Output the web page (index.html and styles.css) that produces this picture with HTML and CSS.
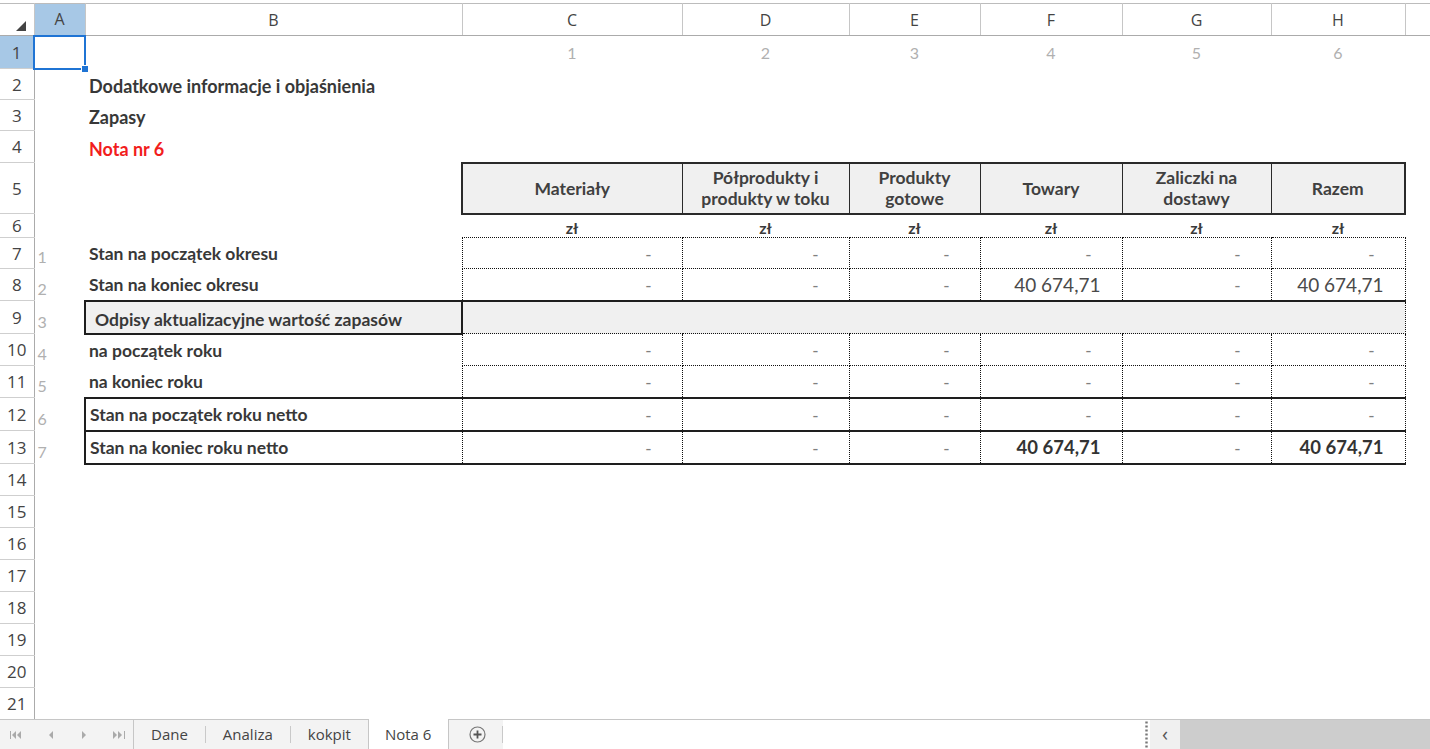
FILE: index.html
```html
<!DOCTYPE html>
<html lang="pl">
<head>
  <meta charset="UTF-8" />
  <title>Nota 6 - Zapasy</title>
  <link rel="stylesheet" href="styles.css">
</head>
<body>
  <!-- Arkusz -->
  <div class="sheet-wrap">
    <table class="sheet">
      <colgroup>
        <col style="width:34px"><col style="width:51px"><col style="width:377px">
        <col style="width:220px"><col style="width:167px"><col style="width:131px">
        <col style="width:142px"><col style="width:149px"><col style="width:134px">
        <col style="width:25px">
      </colgroup>
      <tr class="cols">
        <th class="corner"><svg width="10" height="10" viewBox="0 0 10 10"><polygon points="10,0 10,10 0,10" fill="#444"/></svg></th>
        <th class="sel">A</th><th>B</th><th>C</th><th>D</th><th>E</th><th>F</th><th>G</th><th>H</th><th></th>
      </tr>
      <tr style="height:33px">
        <th class="rh sel">1</th>
        <td class="active"><span class="handle"></span></td><td></td>
        <td class="idx">1</td><td class="idx">2</td><td class="idx">3</td><td class="idx">4</td><td class="idx">5</td><td class="idx">6</td><td></td>
      </tr>
      <tr style="height:31px">
        <th class="rh">2</th><td></td><td class="lbl low title">Dodatkowe informacje i objaśnienia</td>
        <td></td><td></td><td></td><td></td><td></td><td></td><td></td>
      </tr>
      <tr style="height:31px">
        <th class="rh">3</th><td></td><td class="lbl low title">Zapasy</td>
        <td></td><td></td><td></td><td></td><td></td><td></td><td></td>
      </tr>
      <tr style="height:32px">
        <th class="rh">4</th><td></td><td class="lbl low title red">Nota nr 6</td>
        <td></td><td></td><td></td><td></td><td></td><td></td><td></td>
      </tr>
      <tr style="height:51px">
        <th class="rh">5</th><td></td><td></td>
        <td class="hd first">Materiały</td>
        <td class="hd">Półprodukty i<br>produkty w toku</td>
        <td class="hd">Produkty<br>gotowe</td>
        <td class="hd">Towary</td>
        <td class="hd">Zaliczki na<br>dostawy</td>
        <td class="hd last">Razem</td>
        <td></td>
      </tr>
      <tr style="height:23px">
        <th class="rh">6</th><td></td><td></td>
        <td class="cur">zł</td><td class="cur">zł</td><td class="cur">zł</td><td class="cur">zł</td><td class="cur">zł</td><td class="cur">zł</td><td></td>
      </tr>
      <tr style="height:31px">
        <th class="rh">7</th><td class="no">1</td><td class="lbl">Stan na początek okresu</td>
        <td class="v"><span class="dash">-</span></td><td class="v"><span class="dash">-</span></td><td class="v"><span class="dash">-</span></td>
        <td class="v"><span class="dash">-</span></td><td class="v"><span class="dash">-</span></td><td class="v"><span class="dash">-</span></td><td></td>
      </tr>
      <tr style="height:32px">
        <th class="rh">8</th><td class="no">2</td><td class="lbl">Stan na koniec okresu</td>
        <td class="v"><span class="dash">-</span></td><td class="v"><span class="dash">-</span></td><td class="v"><span class="dash">-</span></td>
        <td class="v">40 674,71</td><td class="v"><span class="dash">-</span></td><td class="v">40 674,71</td><td></td>
      </tr>
      <tr style="height:33px">
        <th class="rh">9</th><td class="no">3</td><td class="lbl box">Odpisy aktualizacyjne wartość zapasów</td>
        <td class="band" colspan="6"></td><td></td>
      </tr>
      <tr style="height:32px">
        <th class="rh">10</th><td class="no">4</td><td class="lbl">na początek roku</td>
        <td class="v"><span class="dash">-</span></td><td class="v"><span class="dash">-</span></td><td class="v"><span class="dash">-</span></td>
        <td class="v"><span class="dash">-</span></td><td class="v"><span class="dash">-</span></td><td class="v"><span class="dash">-</span></td><td></td>
      </tr>
      <tr style="height:32px">
        <th class="rh">11</th><td class="no">5</td><td class="lbl">na koniec roku</td>
        <td class="v"><span class="dash">-</span></td><td class="v"><span class="dash">-</span></td><td class="v"><span class="dash">-</span></td>
        <td class="v"><span class="dash">-</span></td><td class="v"><span class="dash">-</span></td><td class="v"><span class="dash">-</span></td><td></td>
      </tr>
      <tr class="net" style="height:33px">
        <th class="rh">12</th><td class="no">6</td><td class="lbl">Stan na początek roku netto</td>
        <td class="v"><span class="dash">-</span></td><td class="v"><span class="dash">-</span></td><td class="v"><span class="dash">-</span></td>
        <td class="v"><span class="dash">-</span></td><td class="v"><span class="dash">-</span></td><td class="v"><span class="dash">-</span></td><td></td>
      </tr>
      <tr class="net" style="height:33px">
        <th class="rh">13</th><td class="no">7</td><td class="lbl">Stan na koniec roku netto</td>
        <td class="v"><span class="dash">-</span></td><td class="v"><span class="dash">-</span></td><td class="v"><span class="dash">-</span></td>
        <td class="v strong">40 674,71</td><td class="v"><span class="dash">-</span></td><td class="v strong">40 674,71</td><td></td>
      </tr>
      <tr class="empty"><th class="rh">14</th><td colspan="9"></td></tr>
      <tr class="empty"><th class="rh">15</th><td colspan="9"></td></tr>
      <tr class="empty"><th class="rh">16</th><td colspan="9"></td></tr>
      <tr class="empty"><th class="rh">17</th><td colspan="9"></td></tr>
      <tr class="empty"><th class="rh">18</th><td colspan="9"></td></tr>
      <tr class="empty"><th class="rh">19</th><td colspan="9"></td></tr>
      <tr class="empty"><th class="rh">20</th><td colspan="9"></td></tr>
      <tr class="empty"><th class="rh">21</th><td colspan="9"></td></tr>
    </table>
  </div>

  <!-- Zakładki arkuszy -->
  <div class="tabbar">
    <div class="nav">
      <svg width="12" height="8" viewBox="0 0 12 8"><rect x="0" y="0" width="1" height="8" fill="#aaa"/><polygon points="6,0 6,8 2,4" fill="#aaa"/><polygon points="11,0 11,8 7,4" fill="#aaa"/></svg>
      <svg width="5" height="8" viewBox="0 0 5 8"><polygon points="4,0 4,8 0,4" fill="#aaa"/></svg>
      <svg width="5" height="8" viewBox="0 0 5 8"><polygon points="1,0 1,8 5,4" fill="#aaa"/></svg>
      <svg width="12" height="8" viewBox="0 0 12 8"><polygon points="0,0 0,8 4,4" fill="#aaa"/><polygon points="5,0 5,8 9,4" fill="#aaa"/><rect x="11" y="0" width="1" height="8" fill="#aaa"/></svg>
    </div>
    <div class="tabs">
      <span class="tab">Dane</span>
      <span class="tab">Analiza</span>
      <span class="tab">kokpit</span>
      <span class="tab on">Nota 6</span>
      <span class="add"><svg width="17" height="17" viewBox="0 0 17 17"><circle cx="8.5" cy="8.5" r="7.5" fill="none" stroke="#777" stroke-width="1.2"/><path d="M8.5 4.5v8M4.5 8.5h8" stroke="#555" stroke-width="1.8"/></svg></span>
    </div>
    <div class="hbar"></div>
    <div class="split"></div>
    <div class="sleft">‹</div>
    <div class="track"></div>
  </div>
</body>
</html>
```

FILE: styles.css
```css
body, html {
  margin: 0;
  padding: 0;
  width: 1430px;
  height: 749px;
  overflow: hidden;
  background-color: #fff;
  font-family: Lato, "Liberation Sans", sans-serif;
  color: #3b3b3b;
}

body {
  display: flex;
  flex-direction: column;
}

/* Sheet grid */
.sheet-wrap {
  flex: 1;
  overflow: hidden;
  padding-top: 3px;
}

.sheet {
  border-collapse: collapse;
  table-layout: fixed;
  width: 1430px;
}

.sheet td {
  padding: 0;
  white-space: nowrap;
  font-size: 17.5px;
}

/* Column letters */
.cols th {
  height: 27px;
  font-family: "Open Sans", sans-serif;
  font-weight: 400;
  font-size: 16px;
  line-height: 20px;
  color: #444;
  border-top: 1px solid #bcbcbc;
  border-right: 1px solid #c6c6c6;
  border-bottom: 1px solid #ababab;
  padding: 0;
}

.cols th.corner {
  text-align: right;
  vertical-align: bottom;
  padding: 0 8px 4px 0;
}

.cols th.corner svg {
  display: block;
  margin-left: auto;
}

.cols th.sel,
.rh.sel {
  background-color: #a7c8e6;
}

/* Row numbers */
.rh {
  font-family: "Open Sans", sans-serif;
  font-weight: 400;
  font-size: 17px;
  color: #444;
  border-right: 1px solid #ababab;
  border-bottom: 1px solid #cfcfcf;
  padding: 0;
}

.empty {
  height: 32px;
}

/* Active cell A1 */
.active {
  position: relative;
  border: 2px solid #1f74d4;
}

.handle {
  position: absolute;
  right: -5px;
  bottom: -5px;
  width: 6px;
  height: 6px;
  background-color: #1f74d4;
  border: 1px solid #fff;
}

.sheet td.idx {
  text-align: center;
  color: #b0b0b0;
  font-size: 16px;
}

.lbl {
  font-weight: 700;
  padding-left: 4px !important;
  color: #383838;
}

.sheet td.title {
  font-size: 18px;
}

.low {
  vertical-align: bottom;
  padding-bottom: 3px !important;
}

.red {
  color: #f21d1d;
}

.sheet td.no {
  color: #b0b0b0;
  font-size: 16px;
  padding-left: 3px;
  vertical-align: bottom;
  padding-bottom: 3px;
}

/* Column headings of the note */
.sheet td.hd {
  background-color: #f0f0f0;
  border: 1px solid #2a2a2a;
  border-top-width: 2px;
  border-bottom-width: 2px;
  text-align: center;
  font-weight: 700;
  font-size: 17.5px;
  line-height: 21px;
  color: #404040;
}

.sheet td.hd.first {
  border-left-width: 2px;
}

.sheet td.hd.last {
  border-right-width: 2px;
}

.sheet td.cur {
  text-align: center;
  font-weight: 700;
  font-size: 16px;
  vertical-align: bottom;
}

/* Values */
.sheet td.v {
  border: 1px dotted #111;
  text-align: right;
  padding-right: 21px;
  color: #4a4a4a;
  font-size: 19px;
}

.sheet td.v.strong {
  font-weight: 700;
  color: #333;
  font-size: 18.5px;
}

.dash {
  color: #808080;
  font-size: 17px;
  margin-right: 9px;
}

.box {
  border: 2px solid #1e1e1e;
  background-color: #f0f0f0;
  padding-left: 9px !important;
  vertical-align: bottom;
  padding-bottom: 3px !important;
}

.band {
  background-color: #f0f0f0;
  border-top: 2px solid #1e1e1e;
  border-right: 1px dotted #111;
  border-bottom: 1px dotted #111;
}

.net td.lbl {
  border-left: 2px solid #1e1e1e;
  border-top: 2px solid #1e1e1e;
  border-bottom: 2px solid #1e1e1e;
}

.sheet .net td.v {
  border-top: 2px solid #1e1e1e;
  border-bottom: 2px solid #1e1e1e;
}

/* Sheet tabs */
.tabbar {
  height: 30px;
  display: flex;
  align-items: stretch;
  font-family: "Open Sans", sans-serif;
  font-size: 15px;
  color: #444;
  flex-shrink: 0;
}

.nav {
  display: flex;
  align-items: center;
  gap: 27px;
  padding: 0 0 0 10px;
  width: 134px;
  background-color: #f3f3f3;
  border-top: 1px solid #c6c6c6;
  border-right: 1px solid #c6c6c6;
  box-sizing: border-box;
}

.tabs {
  display: flex;
  align-items: center;
  background-color: #f3f3f3;
  border-top: 1px solid #c6c6c6;
}

.tab {
  padding: 0 17px;
  border-right: 1px solid #c9c9c9;
  line-height: 17px;
}

.tab.on {
  background-color: #fff;
  align-self: stretch;
  display: flex;
  align-items: center;
  line-height: normal;
  border-left: 1px solid #c6c6c6;
  border-right: 1px solid #c6c6c6;
  margin-top: -1px;
  margin-left: -1px;
  padding: 0 17px 0 16px;
}

.add {
  display: flex;
  align-items: center;
  padding: 0 16px 0 20px;
  border-right: 1px solid #c9c9c9;
  height: 17px;
}

.hbar {
  flex: 1;
  background-color: #fff;
  border-top: 1px solid #c6c6c6;
}

.split {
  width: 8px;
  background: radial-gradient(circle, #777 1px, transparent 1.4px) center / 3px 4px repeat-y;
  background-color: #fff;
  border-top: 1px solid #c6c6c6;
}

.sleft {
  width: 30px;
  background-color: #f0f0f0;
  text-align: center;
  line-height: 28px;
  font-size: 20px;
  color: #555;
  border-top: 1px solid #c6c6c6;
}

.track {
  width: 250px;
  background-color: #cdcdcd;
  border-top: 1px solid #c6c6c6;
}
```
